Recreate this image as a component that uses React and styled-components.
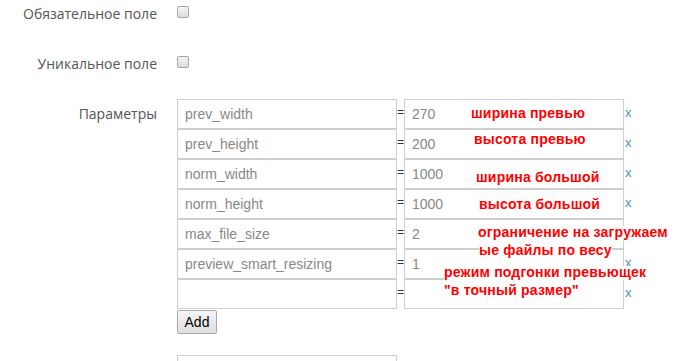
import React from 'react';
import styled, { createGlobalStyle } from 'styled-components';

const GlobalStyle = createGlobalStyle`
	body {
		margin: 0;
		background: #fff;
	}
`;

const params = [
	{ key: 'prev_width', value: '270' },
	{ key: 'prev_height', value: '200' },
	{ key: 'norm_width', value: '1000' },
	{ key: 'norm_height', value: '1000' },
	{ key: 'max_file_size', value: '2' },
	{ key: 'preview_smart_resizing', value: '1' },
	{ key: '', value: '' }
];

// notes drawn over the screenshot: left edge and baseline
const notes = [
	{ text: 'ширина превью', x: 471, y: 118 },
	{ text: 'высота превью', x: 474, y: 144 },
	{ text: 'ширина большой', x: 476, y: 182 },
	{ text: 'высота большой', x: 479, y: 209 },
	{ text: 'ограничение на загружаем', x: 478, y: 237 },
	{ text: 'ые файлы по весу', x: 479, y: 255 },
	{ text: 'режим подгонки превьющек', x: 444, y: 277 },
	{ text: '"в точный размер"', x: 444, y: 295 }
];

const Page = styled.div`
	position: relative;
	width: 689px;
	height: 361px;
	overflow: hidden;
`;

const FormGroup = styled.div`
	display: grid;
	grid-template-columns: 157px 1fr;
	column-gap: 20px;
	margin-bottom: ${p => p.$space}px;
`;

const Label = styled.label`
	text-align: right;
	font-family: "Open Sans", "Liberation Sans", sans-serif;
	font-size: 14px;
	color: #555;
	line-height: ${p => p.$line}px;
`;

const Check = styled.input.attrs({ type: 'checkbox' })`
	appearance: none;
	margin: 6px 0 0 0;
	width: 12px;
	height: 12px;
	border: 1px solid #a6a6a6;
	border-radius: 2px;
	background: linear-gradient(#f4f4f4, #dcdcdc);
	box-sizing: border-box;
`;

const ParamList = styled.div`
	display: flex;
	flex-direction: column;
	align-items: flex-start;
`;

const ParamRow = styled.div`
	display: flex;
	align-items: center;
	height: 30px;
`;

const TextInput = styled.input.attrs({ type: 'text' })`
	box-sizing: border-box;
	width: 220px;
	height: 30px;
	margin: 0;
	padding: 0 7px;
	border: 1px solid #cfcfcf;
	font-family: "Liberation Sans", Arial, sans-serif;
	font-size: 14px;
	color: #888;
	background: #fff;
	outline: none;
`;

const Eq = styled.span`
	width: 7px;
	font-family: "Liberation Sans", Arial, sans-serif;
	font-size: 12px;
	color: #333;
	margin-top: -4px;
`;

const Remove = styled.a`
	margin-left: 1px;
	font-family: "Liberation Sans", Arial, sans-serif;
	font-size: 13px;
	color: #4a8fd6;
	text-decoration: none;
	margin-top: -3px;
`;

const AddButton = styled.button`
	margin-top: 1px;
	width: 40px;
	height: 24px;
	padding: 0;
	border: 1px solid #a9a9a9;
	border-radius: 2px;
	background: linear-gradient(#f7f7f7, #dddddd);
	font-family: "Liberation Sans", Arial, sans-serif;
	font-size: 14px;
	color: #000;
`;

const Note = styled.div`
	position: absolute;
	left: ${p => p.$x}px;
	top: ${p => p.$y - 11}px;
	font-family: "Liberation Sans", Arial, sans-serif;
	font-weight: bold;
	font-size: 14px;
	line-height: 12px;
	padding-bottom: 2px;
	letter-spacing: 0.2px;
	color: #ff0000;
	background: #fff;
	white-space: nowrap;
`;

export default function App() {
	return (
		<Page>
			<GlobalStyle />
			<FormGroup $space={23}>
				<Label $line={27}>Обязательное поле</Label>
				<div><Check /></div>
			</FormGroup>
			<FormGroup $space={22}>
				<Label $line={27}>Уникальное поле</Label>
				<div><Check /></div>
			</FormGroup>
			<FormGroup $space={21}>
				<Label $line={30}>Параметры</Label>
				<ParamList>
					{params.map((p, i) => (
						<ParamRow key={i}>
							<TextInput defaultValue={p.key} />
							<Eq>=</Eq>
							<TextInput defaultValue={p.value} />
							<Remove href="#">x</Remove>
						</ParamRow>
					))}
					<AddButton>Add</AddButton>
				</ParamList>
			</FormGroup>
			<FormGroup $space={0}>
				<Label $line={30}></Label>
				<div><TextInput /></div>
			</FormGroup>
			{notes.map((n, i) => (
				<Note key={i} $x={n.x} $y={n.y}>{n.text}</Note>
			))}
		</Page>
	);
}
